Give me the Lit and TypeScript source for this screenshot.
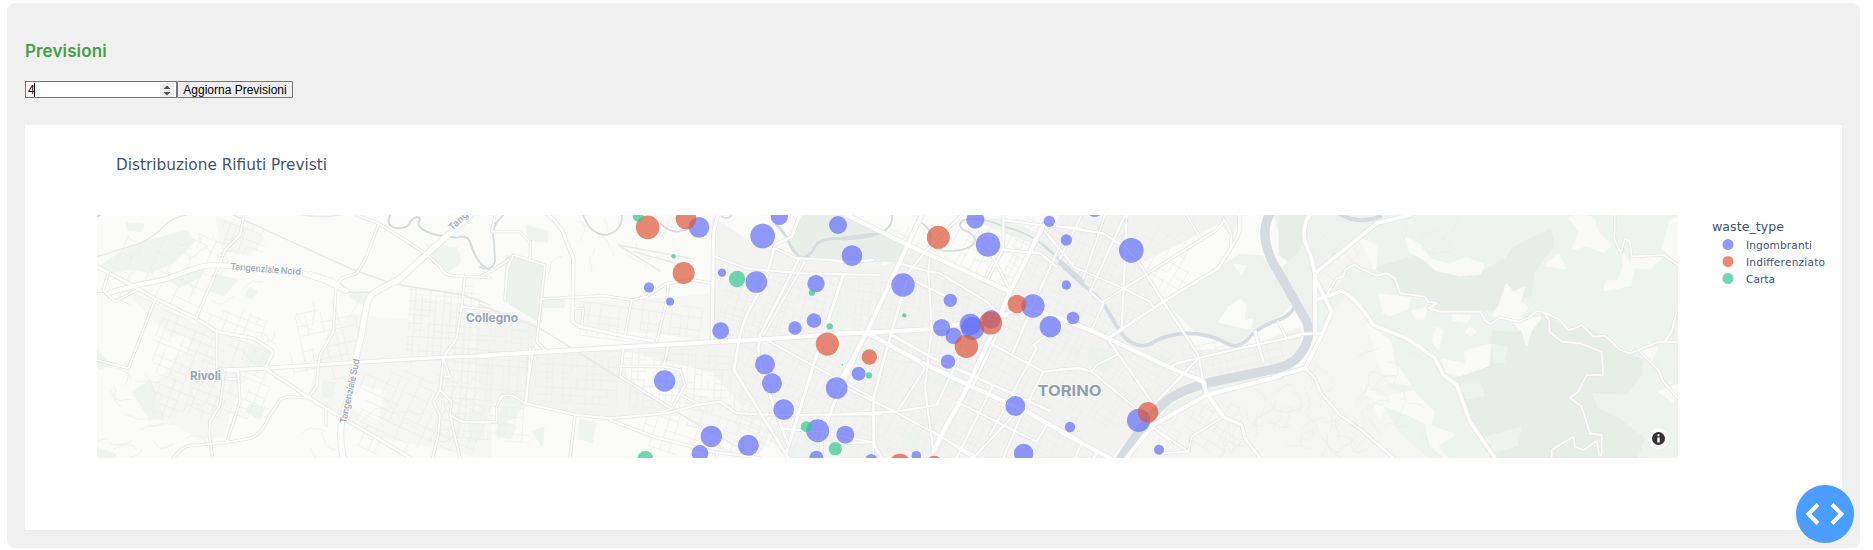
import { LitElement, css, html, svg } from "lit";
import { customElement } from "lit/decorators.js";

type Tile = "A" | "B" | "C" | "D" | "E";

// Map geometry is stored per tile, three units to the pixel.
const ORIGIN: Record<Tile, number> = { A: 90, B: 480, C: 840, D: 1060, E: 1280 };
const place = (t: Tile) => `translate(${ORIGIN[t]} 205) scale(.33333)`;

const ROADS: [Tile, number, string][] = [
  ["A", 5, "M195 285L115 490 21 465M55 203L40 255 75 290 150 250M318 340L390 175 405 135 450 90 462 30M380 380V495M402 495L398 540 390 600 360 650 358 690 368 759M445 500L450 590 410 712M708 612V660M412 500H445V522H412"],
  ["A", 5, "M250 759Q275 725 300 722L410 712 480 700Q515 690 540 630L570 585Q590 570 620 577H655L680 545 686 475 690 450 730 380 738 245 755 220 800 205 825 165 865 60"],
  ["A", 5, "M800 30L865 55 945 105 1010 148 1050 185Q1060 210 1090 212L1200 218M1125 215L1115 305 1200 315M1115 305L1100 400 1060 457 1050 555 1030 590 1050 630 1045 690 1028 759M1050 555L1085 590 1080 630 1110 759M1080 630L1115 650 1200 653M1060 460L1080 515 1065 515"],
  ["A", 8, "M21 185L55 203 130 243 195 280 318 340 380 380 490 400 540 432Q550 440 545 450L525 490 600 540 655 577 750 635 850 692 960 759"],
  ["A", 9, "M385 495L525 490 800 472 1060 457 1200 452"],
  ["A", 13, "M60 262L130 243 230 222 300 196Q340 180 380 180L430 184 530 196 640 205 700 225 770 258"],
  ["A", 9, "M660 205L730 228 770 258"],
  ["A", 16, "M1140 30L1010 148 925 225Q850 260 840 275 828 295 815 390L795 470 780 560 755 650Q747 690 760 759"],
  ["B", 5, "M185 282L370 272 455 285 500 275 560 235 640 225 700 235M455 285L435 390M565 235L560 290 530 408M430 430L420 515 575 612M420 483L550 485 600 495 615 540 575 612M565 425L550 485M605 570L660 600M280 310H310L305 360"],
  ["B", 5, "M160 430L135 595 105 575Q80 565 65 575L50 605V650L0 653M150 430L140 590M195 180L170 410 195 435M75 285L82 190 100 150 195 180M0 215L40 195 85 165M150 160L152 115 120 80H35L45 30M285 630L270 759M710 740V759"],
  ["B", 6, "M135 595L290 630 390 640 560 625 660 598 720 590 770 625 900 630 1200 628M390 645L520 695 700 740 840 759M705 155L800 190 960 205 1200 210M885 130L950 160 1050 165 1100 172 1180 165"],
  ["B", 5, "M850 400L1060 515 1180 580V759M900 670L1020 680 1120 700 1180 712M975 170L850 390"],
  ["B", 8, "M205 30Q240 60 250 85L280 160 278 350 300 365 440 395 520 408M960 30L935 95 885 120 855 230 810 310Q780 370 775 420L762 495 925 759M955 165L840 390 835 430 840 480 880 600 925 720"],
  ["B", 9, "M1090 210L1010 450 920 740M1200 300L1160 380 1060 600 1025 700V740M715 30Q700 60 700 120L697 400"],
  ["B", 12, "M0 452L400 428 850 403 1100 385 1200 381"],
  ["C", 6, "M175 175L270 200 300 205 440 290 480 330M270 150L265 200 275 370 255 550 280 740M365 30L265 130 190 220M490 30V130L440 230M420 80L510 255M440 130L600 145 650 185M490 45L600 60 720 70M615 80L700 180M220 225L310 270"],
  ["C", 6, "M460 420L610 500 720 488M610 500L540 640 490 759M660 120L580 300 515 450M620 390L580 420 590 430 450 690M540 610L400 759M350 590L590 710 620 660M0 627L165 620 290 600 370 430M165 620L400 750M0 540L165 620M0 715L100 712M240 475L255 490 175 615M460 540L350 759M280 680L400 759"],
  ["C", 8, "M155 390L280 460 460 540 630 618M200 230L155 380 100 580 102 720 125 759M480 330L560 310 720 360M470 390L400 540"],
  ["C", 12, "M0 20L200 118 270 150 510 260M245 30L80 383 0 530M-20 386L80 383 280 372 420 345 500 330"],
  ["C", 13, "M80 383L240 470 385 540 560 620 720 710M610 60L510 260 450 400 385 540 355 600 325 650 280 740"],
  ["D", 5, "M65 30L0 160M135 30L70 220M0 135L40 185 190 250 270 290 280 305M130 290L350 150 470 75 495 45M380 30L425 105M490 40L515 90 512 120M655 350L680 400M95 500L240 620M490 635L395 695 385 740 270 660 330 710 325 720M385 740L300 745M65 715L45 759"],
  ["D", 6, "M195 30L90 260 130 295 95 375M200 30L193 200 185 370M145 405L275 590M0 65L130 85 200 130 235 170 310 290 415 450 430 530M330 488L350 475 540 430 720 392M415 460L280 600M0 493L60 490 95 500 110 480 170 450"],
  ["D", 8, "M145 400L310 290 475 190 530 100 538 80V30M490 635L545 660 555 700 600 759M585 380L610 470M110 745L100 759"],
  ["D", 12, "M-60 320L0 340 100 380 145 400 330 488 430 530 440 565 490 635M0 680L150 759M660 513L440 570 280 660 200 759"],
  ["E", 5, "M140 270L170 220 190 215 195 195 225 178 240 190 290 212 320 205 345 220 360 265 435 275 445 290 470 295 445 310 480 320H600L615 345 630 357 660 338 715 350 745 338 770 318Q800 320 808 350V380L845 410 900 415 965 440 970 510 920 510 895 560 870 578 905 605 930 685 965 690V750H958L950 708 910 735 885 725 880 695 815 735V759"],
  ["E", 5, "M790 320L840 345 865 375 885 370 905 360 940 395 975 392 1020 435 1050 445 1075 435 1135 410 1195 412M1190 320L1175 380 1155 408M1075 435L1135 495 1150 530 1195 580M1005 30L1003 100 1022 145 1035 100 1050 110 1055 155 1150 150 1195 180"],
  ["E", 7, "M75 490L105 520 120 560 180 630 250 680 340 759M0 405L60 387 125 385"],
  ["E", 11, "M90 30Q65 60 75 110L95 160 105 210V380M390 30L290 55 105 205M105 220L155 320 125 390 75 490 0 510M110 285L185 258Q230 280 280 360L380 400 465 460 490 510 530 540 570 650 645 759"],
];

const RAILS: [Tile, string][] = [
  ["A", "M21 155L150 115Q200 90 220 65 250 35 290 30M430 30L560 90 780 190 910 237 1120 270 1200 300M21 262H60M770 262H850M640 30Q700 40 750 30"],
  ["B", "M0 300L180 370 420 520M575 612L830 759M415 120L630 160M415 120L540 198M460 140L600 178"],
];

const WATER: [Tile, number, string][] = [
  ["A", 6, "M900 30Q885 65 925 70 960 68 960 50 985 25 990 45 970 70 1040 90L1100 98Q1130 88 1140 110 1160 180 1200 195M21 33L35 28"],
  ["B", 5, "M70 30Q30 65 42 110L45 170Q35 200 0 187M310 30Q330 90 380 90 430 75 425 30M540 55Q580 95 630 70M725 35Q745 45 755 30"],
  ["B", 8, "M890 60Q920 90 930 120 965 185 1000 135 1010 98 1080 100L1200 85"],
  ["C", 5, "M155 30Q165 75 90 95 30 105 0 103M240 50Q280 75 270 110 280 140 340 138 410 130 405 100 400 85 370 75 350 60 370 45 430 35 490 65 560 80 610 120"],
  ["C", 8, "M610 120L730 228"],
  ["D", 11, "M0 175L70 240Q110 270 130 295L180 380Q220 435 270 418 310 388 380 385 450 385 500 415 530 435 560 405 590 370 640 350 690 335 700 310"],
  ["D", 28, "M630 25Q595 90 640 175L740 350Q760 400 715 455 690 485 620 497L460 530Q350 555 300 605 240 670 180 765"],
  ["E", 12, "M180 28Q235 60 300 35"],
];

// Wooded, built-up and open ground, painted in order.
const LAND: [Tile, string, string][] = [
  ["A", "#f6f6f5", "M110 260L380 390 540 430 520 490 440 540 400 690 330 700 230 640 180 560 260 470 210 430 250 400Z"],
  ["A", "#f6f6f5", "M780 330L970 350 970 280 1200 310V759L850 690 770 630 660 570 690 460Z"],
  ["A", "#f6f6f5", "M380 40L450 60 520 100 470 150 400 130Z"],
  ["A", "#f0f4f0", "M21 190L100 140 170 110 290 80 310 110 250 170 180 200 120 190 60 200ZM110 55L160 60 155 78 115 75ZM240 225L340 190 330 215 270 245ZM370 210L440 225 400 270 360 255ZM480 250L500 260 485 280 470 270ZM480 420L540 440 520 490 475 460ZM130 560L180 530 220 640 180 640ZM21 440L60 480 30 490ZM21 730L75 750V759H21ZM1010 120L1100 130 1110 170 1070 200 1030 170ZM700 530L735 535 725 580 700 570ZM780 270L830 262 820 300ZM480 600L520 610 510 640 470 620ZM1140 620L1190 630 1170 700 1140 710Z"],
  ["A", "#fafaf8", "M220 400L290 395 300 430 240 460 210 430ZM460 505L495 505V515H460ZM790 540L880 560 860 650 790 610Z"],
  ["B", "#f3f3f2", "M0 460L420 435 440 520 560 610 400 640 130 595 60 570 0 650ZM0 300L170 360 160 430 0 445ZM700 40L820 120 960 165 1200 170V759H925L700 500 420 430 690 400Z"],
  ["B", "#f6f6f5", "M280 290H450L690 270V400L290 360ZM600 560L900 630 840 740 640 660Z"],
  ["B", "#ecf1ed", "M80 155L195 180 180 350 75 285Z"],
  ["B", "#eff4f0", "M70 580L130 595 100 640 60 650ZM60 650L105 665 90 700 50 690ZM140 65L200 80 200 110 150 105ZM190 285H250V305H190ZM300 645L345 655 335 710 300 700ZM160 680L190 670 185 720ZM590 500L612 540 600 565 585 540ZM925 740L970 705 1040 715 1030 759H925ZM1080 260L1130 250 1110 340 1060 350ZM110 370L140 375 150 400Z"],
  ["B", "#e8efe9", "M960 30H1090L1280 120 1250 168 1100 165 970 162 930 120 945 85Z"],
  ["C", "#f2f2f1", "M200 130L510 260 600 60 720 90V759H0V215L170 175Z"],
  ["C", "#eef3ef", "M400 40L490 45 620 100 600 120 480 75ZM250 490L370 500 340 555 260 520ZM190 690L240 680 230 730Z"],
  ["D", "#f2f2f1", "M0 30H540L470 190 320 290 410 440 560 430 720 370V460L460 520 300 590 150 759H0Z"],
  ["D", "#fafaf8", "M240 180L480 60 530 120 470 185 320 285ZM590 30H620L600 100 605 150 545 150Z"],
  ["D", "#eff1ef", "M320 290L480 190 540 150 605 155 690 300 640 345 580 375 520 420 410 380Z"],
  ["D", "#fafaf8", "M505 310L540 285 555 300 550 350 575 345 570 370 480 350ZM525 180L555 185 545 205Z"],
  ["D", "#edf2ee", "M85 430L170 440 140 500 100 480ZM320 610L430 550 530 525 640 515 700 490 650 530 430 590 300 650ZM260 440L330 460 300 480Z"],
  ["D", "#f5f5f4", "M280 670L440 575 760 505 800 759H210Z"],
  ["E", "#edf3ee", "M-15 30H1195V759H300L100 500 130 390 60 300Z"],
  ["E", "#e7eee8", "M0 30H85L75 80 40 170 0 150Z"],
  ["E", "#eff1ef", "M85 30H290L105 200 75 130 30 170 0 200 90 360 105 300Z"],
  ["E", "#f5f5f4", "M105 205L240 90 290 120 280 190 225 180 150 260ZM155 320L200 280 290 380 330 480 400 560 300 600 360 690 440 759H340L180 630 75 490ZM0 520L75 500 180 630 340 759H0Z"],
  ["E", "#edf3ee", "M200 190L250 200 220 250 190 240ZM290 390L380 410 470 490 530 570 580 700 620 759H470L440 690 400 580 330 540 310 480Z"],
  ["E", "#e7eee8", "M290 190L420 150 520 210 610 200 680 160 700 130 810 75 820 120 760 200 750 270 640 310 600 320 480 315 440 275 360 265 330 210Z"],
  ["E", "#e7eee8", "M640 380L700 385 740 380 790 330 860 375 905 365 980 400 1020 440 1085 465 1080 510 1040 565 930 560 950 610 1010 640 1090 700 1070 759H640L570 650 540 560 530 520 620 480Z"],
  ["E", "#edf3ee", "M545 540L600 540 610 570 560 580ZM640 420L680 430 670 470 645 470ZM610 700L720 670 710 720 640 740Z"],
  ["E", "#f9faf8", "M380 100L420 120 450 165 510 180 560 160 610 180 600 205 540 210 470 195 430 160 390 140ZM890 30L940 40 950 80 990 120 970 140 920 120 880 130 900 80 870 40ZM1030 150L1060 190 1050 240 975 255 980 230 1015 230 1030 190ZM1055 160L1150 150 1110 190 1060 185ZM1170 50L1195 40V170L1150 130ZM680 240L700 265 730 250 720 290 740 310 700 350 640 330 660 300ZM690 340L780 340 750 380 740 420 730 380ZM835 150L855 190 800 180ZM300 270L390 280 380 310 330 330 310 320ZM400 320L440 310 430 340 410 340ZM470 370L485 375 475 430 460 410ZM520 330L570 335 560 350 520 345ZM570 365L585 380 570 390 560 380ZM555 440L630 420 625 480 540 510 500 500 490 465 560 480ZM250 540L300 580 350 570 400 560 460 620 450 660 390 630 310 600 300 640ZM1085 440L1130 430 1110 470ZM1140 560L1195 540 1180 590ZM265 360L330 410 340 470 390 540 330 530 300 480ZM240 100L290 130 285 190 265 150ZM440 660L520 690 470 720 500 759 450 720Z"],
];

// Minor street grids: x, y, width, height in page pixels, angle, spacing.
const GRIDS: [number, number, number, number, number, number][] = [
  [150, 310, 120, 110, 22, 9], [290, 310, 70, 70, -12, 11], [355, 370, 130, 85, 25, 11],
  [405, 285, 75, 80, 4, 7], [440, 320, 90, 125, 4, 8], [535, 350, 85, 60, 3, 8],
  [575, 300, 130, 42, 8, 10], [625, 350, 110, 62, 3, 7], [718, 270, 125, 70, 16, 7],
  [735, 342, 115, 110, 26, 8], [640, 410, 130, 45, 18, 10], [850, 275, 120, 90, 8, 7],
  [850, 360, 130, 96, 26, 8], [890, 225, 130, 70, 27, 8], [960, 290, 125, 165, 28, 8],
  [1010, 215, 120, 80, 25, 8], [1060, 300, 80, 60, 28, 8], [1085, 345, 95, 85, 32, 8],
  [1110, 225, 80, 70, 30, 10], [1180, 340, 110, 40, -14, 8], [1165, 400, 80, 55, 32, 9],
  [110, 230, 110, 80, 25, 16], [1305, 225, 55, 55, 42, 9], [220, 220, 45, 35, 20, 8],
];

function streets(): string {
  let seed = 7;
  const rnd = () => (seed = (seed * 16807) % 2147483647) / 2147483647;
  let d = "";
  for (const [x, y, w, h, deg, step] of GRIDS) {
    const c = Math.cos((deg * Math.PI) / 180), s = Math.sin((deg * Math.PI) / 180);
    const n = Math.ceil(Math.hypot(w, h) / 2 / step);
    const put = (i: number, j: number) => [x + w / 2 + (i * c - j * s) * step, y + h / 2 + (i * s + j * c) * step];
    const inside = (p: number[]) => p[0] >= x && p[0] <= x + w && p[1] >= y && p[1] <= y + h;
    for (let i = -n; i <= n; i++) {
      const drift = (rnd() - 0.5) * 0.5;
      for (let j = -n; j < n; j++) {
        for (const seg of [[put(i + drift, j), put(i + drift, j + 1)], [put(j, i + drift), put(j + 1, i + drift)]]) {
          if (rnd() < 0.8 && inside(seg[0]) && inside(seg[1])) {
            d += `M${seg[0].map((v) => v.toFixed(1)).join(" ")}L${seg[1].map((v) => v.toFixed(1)).join(" ")}`;
          }
        }
      }
    }
  }
  return d;
}

// Winding lanes on the hillsides.
function lanes(): string {
  let seed = 41;
  const rnd = () => (seed = (seed * 16807) % 2147483647) / 2147483647;
  let d = "";
  const zones = [[1290, 380, 80, 75, 34], [1370, 330, 50, 110, 14], [1210, 400, 80, 55, 16], [1390, 220, 110, 40, 6], [105, 370, 90, 80, 20], [110, 240, 190, 60, 14], [240, 300, 120, 50, 8], [560, 235, 120, 50, 10], [300, 400, 180, 50, 12]];
  for (const [x, y, w, h, count] of zones) {
    for (let k = 0; k < count; k++) {
      let a = rnd() * 6.3, px = x + rnd() * w, py = y + rnd() * h;
      d += `M${px.toFixed(1)} ${py.toFixed(1)}`;
      for (let m = 0; m < 5; m++) {
        a += (rnd() - 0.5) * 1.6;
        px += Math.cos(a) * 5;
        py += Math.sin(a) * 5;
        d += `L${px.toFixed(1)} ${py.toFixed(1)}`;
      }
    }
  }
  return d;
}

const STREETS = streets();
const LANES = lanes();

// Markers: tile, x, y, radius.
type Dot = [Tile, number, number, number];
const INGOMBRANTI: Dot[] = [
  ["B", 657, 67, 31], ["B", 898, 34, 26], ["B", 848, 93, 37], ["B", 1074, 60, 27], ["B", 1116, 152, 31],
  ["B", 726, 203, 12.5], ["B", 829, 231, 32.5], ["B", 507, 247, 15.5], ["B", 570, 290, 12.5], ["B", 1008, 236, 26],
  ["B", 1002, 347, 22], ["B", 945, 369, 20], ["B", 722, 377, 25.5], ["B", 855, 478, 30], ["B", 554, 528, 32],
  ["B", 876, 535, 30], ["B", 1070, 549, 32.5], ["B", 1136, 506, 21], ["B", 911, 614, 31], ["B", 694, 694, 32],
  ["B", 660, 745, 25], ["B", 805, 721, 31.5], ["B", 1013, 677, 34.5], ["B", 1096, 689, 27], ["B", 1009, 758, 21],
  ["C", 94, 765, 18], ["C", 229, 752, 14], ["C", 189, 240, 35], ["C", 406, 44, 27], ["C", 444, 119, 36.5],
  ["C", 628, 49, 17], ["C", 679, 105, 17], ["C", 679, 240, 14], ["C", 699, 339, 19], ["C", 631, 365, 32],
  ["C", 579, 303, 35], ["C", 331, 286, 20], ["C", 305, 368, 26], ["C", 341, 393, 24.5], ["C", 391, 358, 32],
  ["C", 398, 370, 35], ["C", 454, 343, 28], ["C", 324, 470, 21.5], ["C", 526, 603, 30], ["C", 551, 745, 29],
  ["C", 690, 666, 15.5], ["D", 104, 11, 25], ["D", 214, 136, 37], ["D", 236, 646, 35], ["D", 297, 734, 15],
];
const INDIFFERENZIATO: Dot[] = [
  ["B", 503, 67, 35.5], ["B", 618, 42, 31], ["B", 611, 204, 33], ["B", 1042, 417, 34.5], ["C", 88, 456, 23],
  ["C", 295, 97, 34.5], ["C", 531, 297, 28], ["C", 452, 354, 34.5], ["C", 379, 424, 35], ["C", 180, 779, 33],
  ["C", 283, 777, 25], ["D", 264, 622, 31],
];
const CARTA: Dot[] = [
  ["B", 474, 34, 16], ["B", 581, 154, 7], ["B", 771, 222, 24.5], ["B", 996, 263, 9.5], ["B", 1049, 364, 9.5],
  ["B", 1087, 479, 2.5], ["B", 1167, 511, 9.5], ["C", 193, 331, 6.5], ["C", 362, 421, 2.5], ["B", 979, 665, 16.5],
  ["B", 1066, 731, 20], ["B", 496, 762, 24],
];

const SERIES = [
  { name: "Ingombranti", color: "#636efa", dots: INGOMBRANTI, width: 66 },
  { name: "Indifferenziato", color: "#dc5539", dots: INDIFFERENZIATO, width: 79 },
  { name: "Carta", color: "#32c891", dots: CARTA, width: 29 },
];

@customElement("waste-map")
class WasteMap extends LitElement {
  static styles = css`
    :host { display: block; width: 1581px; height: 243px; overflow: hidden; }
    svg { display: block; }
    .line { fill: none; stroke-linejoin: round; stroke-linecap: round; }
    .label { font-family: Inter, "Open Sans", sans-serif; fill: #99a3b4; stroke: #fafaf8; stroke-width: 2px; paint-order: stroke; }
    .town { font-size: 12px; font-weight: 700; }
    .city { font-size: 15px; font-weight: 700; fill: #929eaa; }
    .road { font-size: 9.3px; font-weight: 600; fill: #a5acba; }
  `;

  render() {
    return html`<svg width="1581" height="243" viewBox="97 215 1581 243">
      <rect x="97" y="215" width="1581" height="243" fill="#fafaf8"></rect>
      ${LAND.map(([t, c, d]) => svg`<path transform=${place(t)} d=${d} fill=${c} stroke=${c} stroke-width="8" stroke-linejoin="round"></path>`)}
      <path class="line" d=${STREETS} stroke="#ededed" stroke-width=".8"></path>
      <path class="line" d=${LANES} stroke="#ebeceb" stroke-width=".7"></path>
      ${WATER.map(([t, w, d]) => svg`<path class="line" transform=${place(t)} d=${d} stroke="#d5dbde" stroke-width=${w}></path>`)}
      ${RAILS.map(([t, d]) => svg`<path class="line" transform=${place(t)} d=${d} stroke="#e8e8e8" stroke-width="4"></path>`)}
      ${ROADS.map(([t, w, d]) => svg`<path class="line" transform=${place(t)} d=${d} stroke="#e8e8e8" stroke-width=${w + 5}></path>`)}
      ${ROADS.map(([t, w, d]) => svg`<path class="line" transform=${place(t)} d=${d} stroke="#fefefe" stroke-width=${w}></path>`)}
      <text class="label town" x="190" y="379.7" textLength="31" lengthAdjust="spacingAndGlyphs">Rivoli</text>
      <text class="label town" x="466" y="321.7" textLength="52" lengthAdjust="spacingAndGlyphs">Collegno</text>
      <text class="label city" x="1037.5" y="395.5" textLength="64" lengthAdjust="spacingAndGlyphs">TORINO</text>
      <text class="label road" transform="translate(230 269.5) rotate(4.5)" textLength="71">Tangenziale Nord</text>
      <text class="label road" transform="translate(346 424) rotate(-78)" textLength="66">Tangenziale Sud</text>
      <text class="label road" transform="translate(452 231) rotate(-43)" textLength="56">Tangenziale</text>
      ${SERIES.map((s) => s.dots.map(([t, x, y, r]) => svg`<circle cx=${ORIGIN[t] + x / 3} cy=${205 + y / 3} r=${r / 3} fill=${s.color} fill-opacity=".7"></circle>`))}
      <circle cx="1658.5" cy="438.5" r="10.5" fill="#fff" fill-opacity=".75"></circle>
      <circle cx="1658.5" cy="438.5" r="6.5" fill="#333"></circle>
      <path d="M1657.5 434.3h2v2h-2zM1657.3 437.4h2.4v5.2h-2.4z" fill="#fff"></path>
    </svg>`;
  }
}

@customElement("app-root")
class AppRoot extends LitElement {
  static styles = css`
    :host { display: block; box-sizing: border-box; height: 550px; padding: 3px 13px 2px 7px; overflow: hidden; background: #fff; }
    .panel { box-sizing: border-box; height: 545px; padding: 35px 18px 18px; border-radius: 8px; background: #f0f0f0; }
    h3 { margin: 0; height: 43px; font: 600 17px/27px Inter, sans-serif; letter-spacing: .13px; color: #45a049; }
    .controls { display: flex; height: 17px; font: 12px/15px "Liberation Sans", Arial, sans-serif; color: #000; }
    .field { box-sizing: border-box; width: 152px; display: flex; justify-content: space-between; border: 1px solid #767676; padding: 1px 2px 0; background: #fff; }
    .value { width: 6px; border-right: 1px solid #000; height: 14px; line-height: 14px; }
    .spin { width: 14px; height: 14px; background: #efefef; }
    button { box-sizing: border-box; width: 116px; height: 17px; margin: 0; padding: 1px 0 0; border: 1px solid #767676; border-radius: 1px; background: #efefef; font: inherit; color: inherit; line-height: 14px; white-space: nowrap; }
    .plot { box-sizing: border-box; height: 405px; margin-top: 27px; background: #fff; font-family: Verdana, "DejaVu Sans", sans-serif; }
    .heading { display: block; height: 90px; }
    .row { display: flex; padding-left: 72px; }
    text { fill: #405272; }
    .title { font-size: 15.3px; }
    .legend-title { font-size: 12.6px; }
    .legend-item { font-size: 10.6px; }
    .fab { position: absolute; left: 1796px; top: 485px; width: 58px; height: 58px; }
  `;

  render() {
    return html`<div class="panel">
        <h3>Previsioni</h3>
        <div class="controls">
          <div class="field">
            <span class="value">4</span>
            <svg class="spin" viewBox="0 0 14 14"><path d="M3.5 6 7 2.5 10.500 6zM3.500 9 7 12.500 10.500 9z" fill="#505050"></path></svg>
          </div>
          <button>Aggiorna Previsioni</button>
        </div>
        <div class="plot">
          <svg class="heading" width="600" height="90"><text class="title" x="91" y="45" textLength="211">Distribuzione Rifiuti Previsti</text></svg>
          <div class="row">
            <waste-map></waste-map>
            <svg width="164" height="90">
              <text class="legend-title" x="34" y="16" textLength="72">waste_type</text>
              ${SERIES.map((s, i) => svg`<circle cx="50" cy=${29.5 + i * 17} r="5.5" fill=${s.color} fill-opacity=".7"></circle>
                <text class="legend-item" x="68" y=${34 + i * 17} textLength=${s.width}>${s.name}</text>`)}
            </svg>
          </div>
        </div>
      </div>
      <svg class="fab" viewBox="0 0 58 58"><circle cx="29" cy="29" r="29" fill="#4b9eff"></circle><path d="M22 19.5 12.5 29l9.500 9.500M36 19.500l9.500 9.500-9.500 9.500" fill="none" stroke="#fff" stroke-width="4"></path></svg>`;
  }
}
